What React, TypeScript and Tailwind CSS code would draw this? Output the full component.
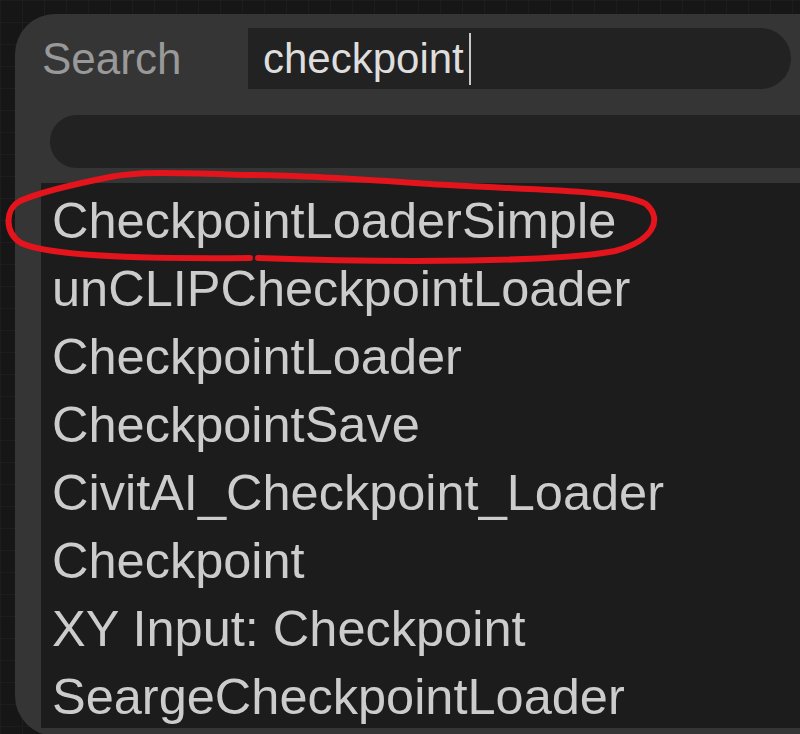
import React from "react";

const items = [
  "CheckpointLoaderSimple",
  "unCLIPCheckpointLoader",
  "CheckpointLoader",
  "CheckpointSave",
  "CivitAI_Checkpoint_Loader",
  "Checkpoint",
  "XY Input: Checkpoint",
  "SeargeCheckpointLoader",
];

export default function App() {
  return (
    <div
      className="relative w-[800px] h-[734px] overflow-hidden bg-[#161616] bg-[linear-gradient(#1d1d1d_1px,transparent_1px),linear-gradient(90deg,#1d1d1d_1px,transparent_1px)] bg-[size:22px_22px]"
      style={{ fontFamily: '"Liberation Sans", Arial, sans-serif' }}
    >
      <div className="absolute left-[15px] top-[14px] w-[820px] h-[722px] bg-[#353535] rounded-l-[40px] flex flex-col">
        {/* Search row */}
        <div className="flex items-center h-[61px] mt-[14px]">
          <div className="w-[233px] pl-[27px] text-[44px] leading-none text-[#999999]">
            Search
          </div>
          <div className="w-[543px] h-[61px] bg-[#222222] rounded-r-[31px] flex items-center pl-[15px]">
            <span className="text-[42px] leading-none text-[#dedede]">checkpoint</span>
            <span className="ml-[5px] w-[2px] h-[52px] bg-[#c8c8c8]" />
          </div>
        </div>
        {/* filter bar */}
        <div className="ml-[35px] mt-[26px] h-[53px] bg-[#222222] rounded-l-[27px]" />
        {/* list */}
        <div className="ml-[26px] mt-[15px] mb-[8px] flex-1 overflow-hidden bg-[#1c1c1c] pt-[4px] pl-[11px]">
          {items.map((t) => (
            <div key={t} className="h-[68px] text-[50.5px] leading-[68px] text-[#cccccc] whitespace-nowrap">
              {t}
            </div>
          ))}
        </div>
      </div>
      <svg className="absolute left-0 top-0 pointer-events-none" width="800" height="734">
        <path
          d="M 258 258 C 400 263, 560 262, 615 251 C 652 241, 664 220, 646 204 C 620 189, 520 190, 430 184 C 360 179, 300 175, 250 175 C 180 173, 140 171, 110 177 C 70 185, 40 192, 20 201 C 4 210, 5 233, 21 243 C 50 257, 150 259, 250 258"
          fill="none"
          stroke="#e3141b"
          strokeWidth="6"
          strokeLinecap="round"
        />
      </svg>
    </div>
  );
}
